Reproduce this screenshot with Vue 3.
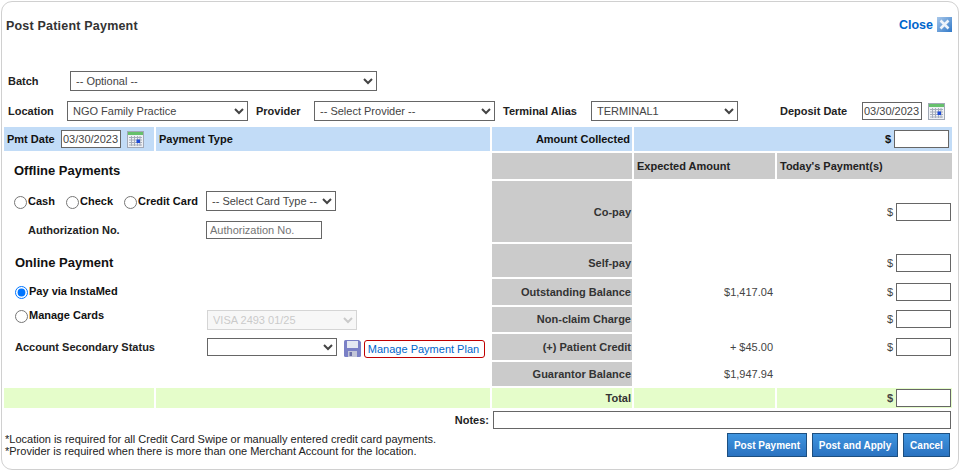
<template>
  <div class="frame">
    <div class="title-row">
      <span class="title">Post Patient Payment</span>
      <a class="close">
        Close
        <svg width="15" height="15" viewBox="0 0 15 15">
          <defs>
            <linearGradient id="closeBg" x1="0" y1="0" x2="1" y2="1">
              <stop offset="0" stop-color="#a9c8ea" />
              <stop offset="1" stop-color="#2f78c8" />
            </linearGradient>
          </defs>
          <rect width="15" height="15" fill="url(#closeBg)" />
          <path d="M3.5 3.5 L11.5 11.5 M11.5 3.5 L3.5 11.5" stroke="#eef4fb" stroke-width="2.6" />
        </svg>
      </a>
    </div>

    <div class="filter-row batch-row">
      <label class="lbl batch-lbl">Batch</label>
      <select class="sel batch-sel"><option>-- Optional --</option></select>
    </div>

    <div class="filter-row loc-row">
      <label class="lbl loc-lbl">Location</label>
      <select class="sel loc-sel"><option>NGO Family Practice</option></select>
      <label class="lbl prov-lbl">Provider</label>
      <select class="sel prov-sel"><option>-- Select Provider --</option></select>
      <label class="lbl term-lbl">Terminal Alias</label>
      <select class="sel term-sel"><option>TERMINAL1</option></select>
      <label class="lbl dep-lbl">Deposit Date</label>
      <input class="date-input" value="03/30/2023" />
      <svg class="cal" width="17" height="17" viewBox="0 0 17 17">
        <use href="#calIcon" />
      </svg>
    </div>

    <table class="grid">
      <colgroup>
        <col style="width: 150px" />
        <col style="width: 334px" />
        <col style="width: 140px" />
        <col style="width: 141px" />
        <col style="width: 175px" />
      </colgroup>
      <tbody>
        <tr class="row-head">
          <td class="blue pmt-cell">
            <div class="pmt-inner">
              <b class="pmt-lbl">Pmt Date</b>
              <input class="date-input" value="03/30/2023" />
              <svg class="cal" width="17" height="17" viewBox="0 0 17 17">
                <symbol id="calIcon" viewBox="0 0 17 17">
                  <rect x="0.5" y="0.5" width="16" height="16" fill="#eef1f5" stroke="#a2a9b6" />
                  <rect x="1" y="1" width="15" height="3" fill="#66c06c" />
                  <path d="M2 6.5h13M2 9h13M2 11.500h13M2 14h13M4.500 5v10M7.500 5v10M10.500 5v10M13 5v10" stroke="#a6adbb" stroke-width="1" />
                  <rect x="9.500" y="8.500" width="3.500" height="3.500" fill="#1b49d8" />
                </symbol>
                <use href="#calIcon" />
              </svg>
            </div>
          </td>
          <td class="blue type-cell"><b>Payment Type</b></td>
          <td class="blue right amt-lbl"><b>Amount Collected</b></td>
          <td class="blue" colspan="2">
            <div class="amt amt-head">
              <b>$</b>
              <input class="money" />
            </div>
          </td>
        </tr>

        <tr class="row-sub">
          <td colspan="2" rowspan="7" class="left-cell">
            <div class="sec offline-head">Offline Payments</div>
            <div class="opt-row radios">
              <label class="radio cash"><input type="radio" name="off" />Cash</label>
              <label class="radio check"><input type="radio" name="off" />Check</label>
              <label class="radio credit"><input type="radio" name="off" />Credit Card</label>
              <select class="sel card-sel"><option>-- Select Card Type --</option></select>
            </div>
            <div class="opt-row auth">
              <b class="auth-lbl">Authorization No.</b>
              <input class="auth-input" placeholder="Authorization No." />
            </div>
            <div class="sec online-head">Online Payment</div>
            <div class="opt-row pay-via">
              <label class="radio"><input type="radio" name="on" checked />Pay via InstaMed</label>
            </div>
            <div class="opt-row manage">
              <label class="radio manage-radio"><input type="radio" name="on" />Manage Cards</label>
              <select class="sel visa-sel" disabled><option>VISA 2493 01/25</option></select>
            </div>
            <div class="opt-row status">
              <b class="status-lbl">Account Secondary Status</b>
              <select class="sel status-sel"><option></option></select>
              <svg class="floppy" width="17" height="17" viewBox="0 0 17 17">
                <path d="M0 1.500 Q0 0 1.500 0 H15 L17 2 V15.500 Q17 17 15.500 17 H1.500 Q0 17 0 15.500Z" fill="#7a80c6" />
                <rect x="3" y="1" width="11" height="7" fill="#e4e8f2" />
                <rect x="4" y="11" width="9" height="6" fill="#c3c6d8" />
                <rect x="5.500" y="12" width="2.500" height="4" fill="#6a6ea6" />
              </svg>
              <a class="plan">Manage Payment Plan</a>
            </div>
          </td>
          <td class="gray"></td>
          <td class="gray head-txt">Expected Amount</td>
          <td class="gray head-txt today">Today's Payment(s)</td>
        </tr>

        <tr v-for="r in rows" :key="r.label" :style="{ height: r.h + 'px' }">
          <td class="gray right lab" :class="r.cls">{{ r.label }}</td>
          <td class="exp">{{ r.expected }}</td>
          <td :class="r.cls">
            <div v-if="r.pay" class="amt pay">
              <span>$</span>
              <input class="money" />
            </div>
          </td>
        </tr>

        <tr class="row-total">
          <td class="green"></td>
          <td class="green"></td>
          <td class="green right lab">Total</td>
          <td class="green"></td>
          <td class="green">
            <div class="amt pay">
              <b>$</b>
              <input class="money" />
            </div>
          </td>
        </tr>
      </tbody>
    </table>

    <div class="notes-row">
      <b>Notes:</b>
      <input class="notes" />
    </div>

    <div class="foot">
      <div class="foot-text">
        <div>*Location is required for all Credit Card Swipe or manually entered credit card payments.</div>
        <div>*Provider is required when there is more than one Merchant Account for the location.</div>
      </div>
      <div class="btns">
        <button class="btn post">Post Payment</button>
        <button class="btn apply">Post and Apply</button>
        <button class="btn cancel">Cancel</button>
      </div>
    </div>
  </div>
</template>

<script setup>
const rows = [
  { label: 'Co-pay', expected: '', pay: true, h: 61 },
  { label: 'Self-pay', expected: '', pay: true, h: 33, cls: 'low' },
  { label: 'Outstanding Balance', expected: '$1,417.04', pay: true, h: 26 },
  { label: 'Non-claim Charge', expected: '', pay: true, h: 25, cls: 'high' },
  { label: '(+) Patient Credit', expected: '+ $45.00', pay: true, h: 26 },
  { label: 'Guarantor Balance', expected: '$1,947.94', pay: false, h: 24 },
]
</script>

<style scoped>
.frame {
  box-sizing: border-box;
  width: 958px;
  height: 469px;
  margin: 1px;
  border: 1px solid #d0d0d0;
  border-radius: 11px;
  background: #fff;
  font-family: "Liberation Sans", Arial, sans-serif;
  font-size: 11px;
  color: #222;
  overflow: hidden;
}
b,
.lbl,
.head-txt,
.lab {
  font-weight: bold;
}
.title-row {
  display: flex;
  justify-content: space-between;
  height: 69px;
  padding: 15px 5px 0 4px;
  box-sizing: border-box;
}
.title {
  font-size: 12.5px;
  letter-spacing: 0.2px;
  font-weight: bold;
  color: #333;
  line-height: 18px;
}
.close {
  display: flex;
  align-items: flex-start;
  gap: 4px;
  font-size: 12.5px;
  font-weight: bold;
  color: #0066cc;
  line-height: 16px;
}
.close svg {
  margin-right: 1px;
}
.filter-row {
  display: flex;
  align-items: center;
  height: 20px;
}
.batch-row {
  padding-left: 6px;
}
.batch-lbl {
  width: 62px;
}
.batch-sel {
  width: 307px;
}
.loc-row {
  margin-top: 10px;
  padding-left: 6px;
}
.loc-lbl {
  width: 59px;
}
.loc-sel {
  width: 181px;
}
.prov-lbl {
  margin-left: 8px;
  width: 58px;
}
.prov-sel {
  width: 181px;
}
.term-lbl {
  margin-left: 8px;
  width: 88px;
}
.term-sel {
  width: 147px;
}
.dep-lbl {
  margin-left: 42px;
  width: 82px;
}
.sel {
  box-sizing: border-box;
  height: 20px;
  border: 1px solid #666;
  border-radius: 0;
  background-color: #fff;
  font-family: inherit;
  font-size: 11px;
  color: #444;
  padding: 0 0 0 1px;
}
.date-input {
  box-sizing: border-box;
  width: 60px;
  height: 18px;
  border: 1px solid #666;
  padding: 0 1px;
  font-family: inherit;
  font-size: 11px;
  color: #444;
}
.cal {
  margin-left: 6px;
  flex: none;
}
.grid {
  width: 952px;
  margin-top: 4px;
  table-layout: fixed;
  border-collapse: separate;
  border-spacing: 2px;
}
.grid td {
  padding: 0;
  overflow: hidden;
}
.row-head {
  height: 24px;
}
.row-sub {
  height: 26px;
}
.row-total {
  height: 20px;
}
.blue {
  background: #c2dcf7;
  color: #111;
}
.gray {
  background: #cbcbcb;
}
.green {
  background: #e5fdca;
}
.right {
  text-align: right;
}
.grid td.right {
  padding-right: 1px;
}
.grid td.amt-lbl {
  padding-right: 2px;
}
.lab {
  color: #333;
}
.grid td.low {
  padding-top: 4px;
}
.grid td.high {
  padding-bottom: 2px;
}
.pmt-inner {
  display: flex;
  align-items: center;
  padding-left: 3px;
}
.pmt-lbl {
  width: 54px;
}
.grid td.type-cell {
  padding-left: 3px;
}
.amt {
  display: flex;
  justify-content: flex-end;
  align-items: center;
}
.amt-head {
  gap: 3px;
  padding-right: 3px;
}
.pay {
  gap: 3px;
  padding-right: 1px;
  color: #444;
}
.money {
  box-sizing: border-box;
  width: 55px;
  height: 18px;
  border: 1px solid #666;
  padding: 0 1px;
}
.head-txt {
  color: #222;
}
.grid td.head-txt {
  padding-left: 3px;
}
.exp {
  text-align: right;
  color: #444;
}
.grid td.exp {
  padding-right: 2px;
}
.grid td.left-cell {
  vertical-align: top;
  padding-left: 10px;
}
.sec {
  font-size: 13px;
  font-weight: bold;
  color: #111;
  height: 20px;
  line-height: 20px;
}
.offline-head {
  margin-top: 8px;
}
.online-head {
  margin-top: 14px;
  margin-left: 1px;
}
.opt-row {
  display: flex;
  align-items: center;
  height: 20px;
}
.radios {
  margin-top: 10px;
}
.radio {
  display: flex;
  align-items: center;
  font-weight: bold;
  color: #111;
}
.radio input {
  margin: 2px 1px 0 0;
  width: 13px;
  height: 13px;
}
.cash {
  width: 52px;
}
.check {
  width: 58px;
}
.credit {
  width: 82px;
}
.card-sel {
  width: 130px;
}
.auth {
  margin-top: 10px;
  height: 18px;
}
.auth-lbl {
  margin-left: 14px;
  width: 178px;
}
.auth-input {
  box-sizing: border-box;
  width: 116px;
  height: 18px;
  border: 1px solid #666;
  padding: 0 3px;
  font-family: inherit;
  font-size: 11px;
}
.pay-via {
  margin-top: 8px;
  margin-left: 1px;
}
.manage {
  margin-top: 9px;
  margin-left: 1px;
}
.manage-radio {
  width: 192px;
  margin-top: -10px;
}
.visa-sel {
  width: 150px;
  border-color: #c4c4c4;
  background-color: #f4f4f4;
  color: #b5b5b5;
}
.status {
  margin-top: 8px;
  margin-left: 1px;
}
.status-lbl {
  width: 192px;
  margin-top: -2px;
}
.status-sel {
  width: 130px;
  height: 18px;
  margin-top: -2px;
}
.floppy {
  margin: 1px 3px 0 7px;
  flex: none;
}
.plan {
  box-sizing: border-box;
  width: 121px;
  height: 18px;
  border: 1px solid #c00000;
  border-radius: 3px;
  color: #0066cc;
  line-height: 16px;
  text-align: center;
  margin-top: 2px;
  padding-right: 2px;
}
.notes-row {
  display: flex;
  justify-content: flex-end;
  align-items: center;
  gap: 4px;
  width: 949px;
  margin-top: 1px;
}
.notes {
  box-sizing: border-box;
  width: 458px;
  height: 18px;
  border: 1px solid #666;
}
.foot {
  display: flex;
  justify-content: space-between;
  width: 948px;
  margin-top: 4px;
  padding-left: 3px;
  box-sizing: border-box;
}
.foot-text {
  line-height: 12px;
  color: #222;
}
.btns {
  display: flex;
  gap: 5px;
}
.btn {
  box-sizing: border-box;
  height: 24px;
  border: 1px solid #1d4f80;
  background: linear-gradient(#3f95e0, #2a72c0);
  color: #fff;
  font-family: inherit;
  font-size: 10px;
  font-weight: bold;
  padding: 0;
  cursor: pointer;
}
.post {
  width: 80px;
}
.apply {
  width: 86px;
}
.cancel {
  width: 47px;
}
</style>

<style>
html,
body {
  background: #fff;
}
</style>
